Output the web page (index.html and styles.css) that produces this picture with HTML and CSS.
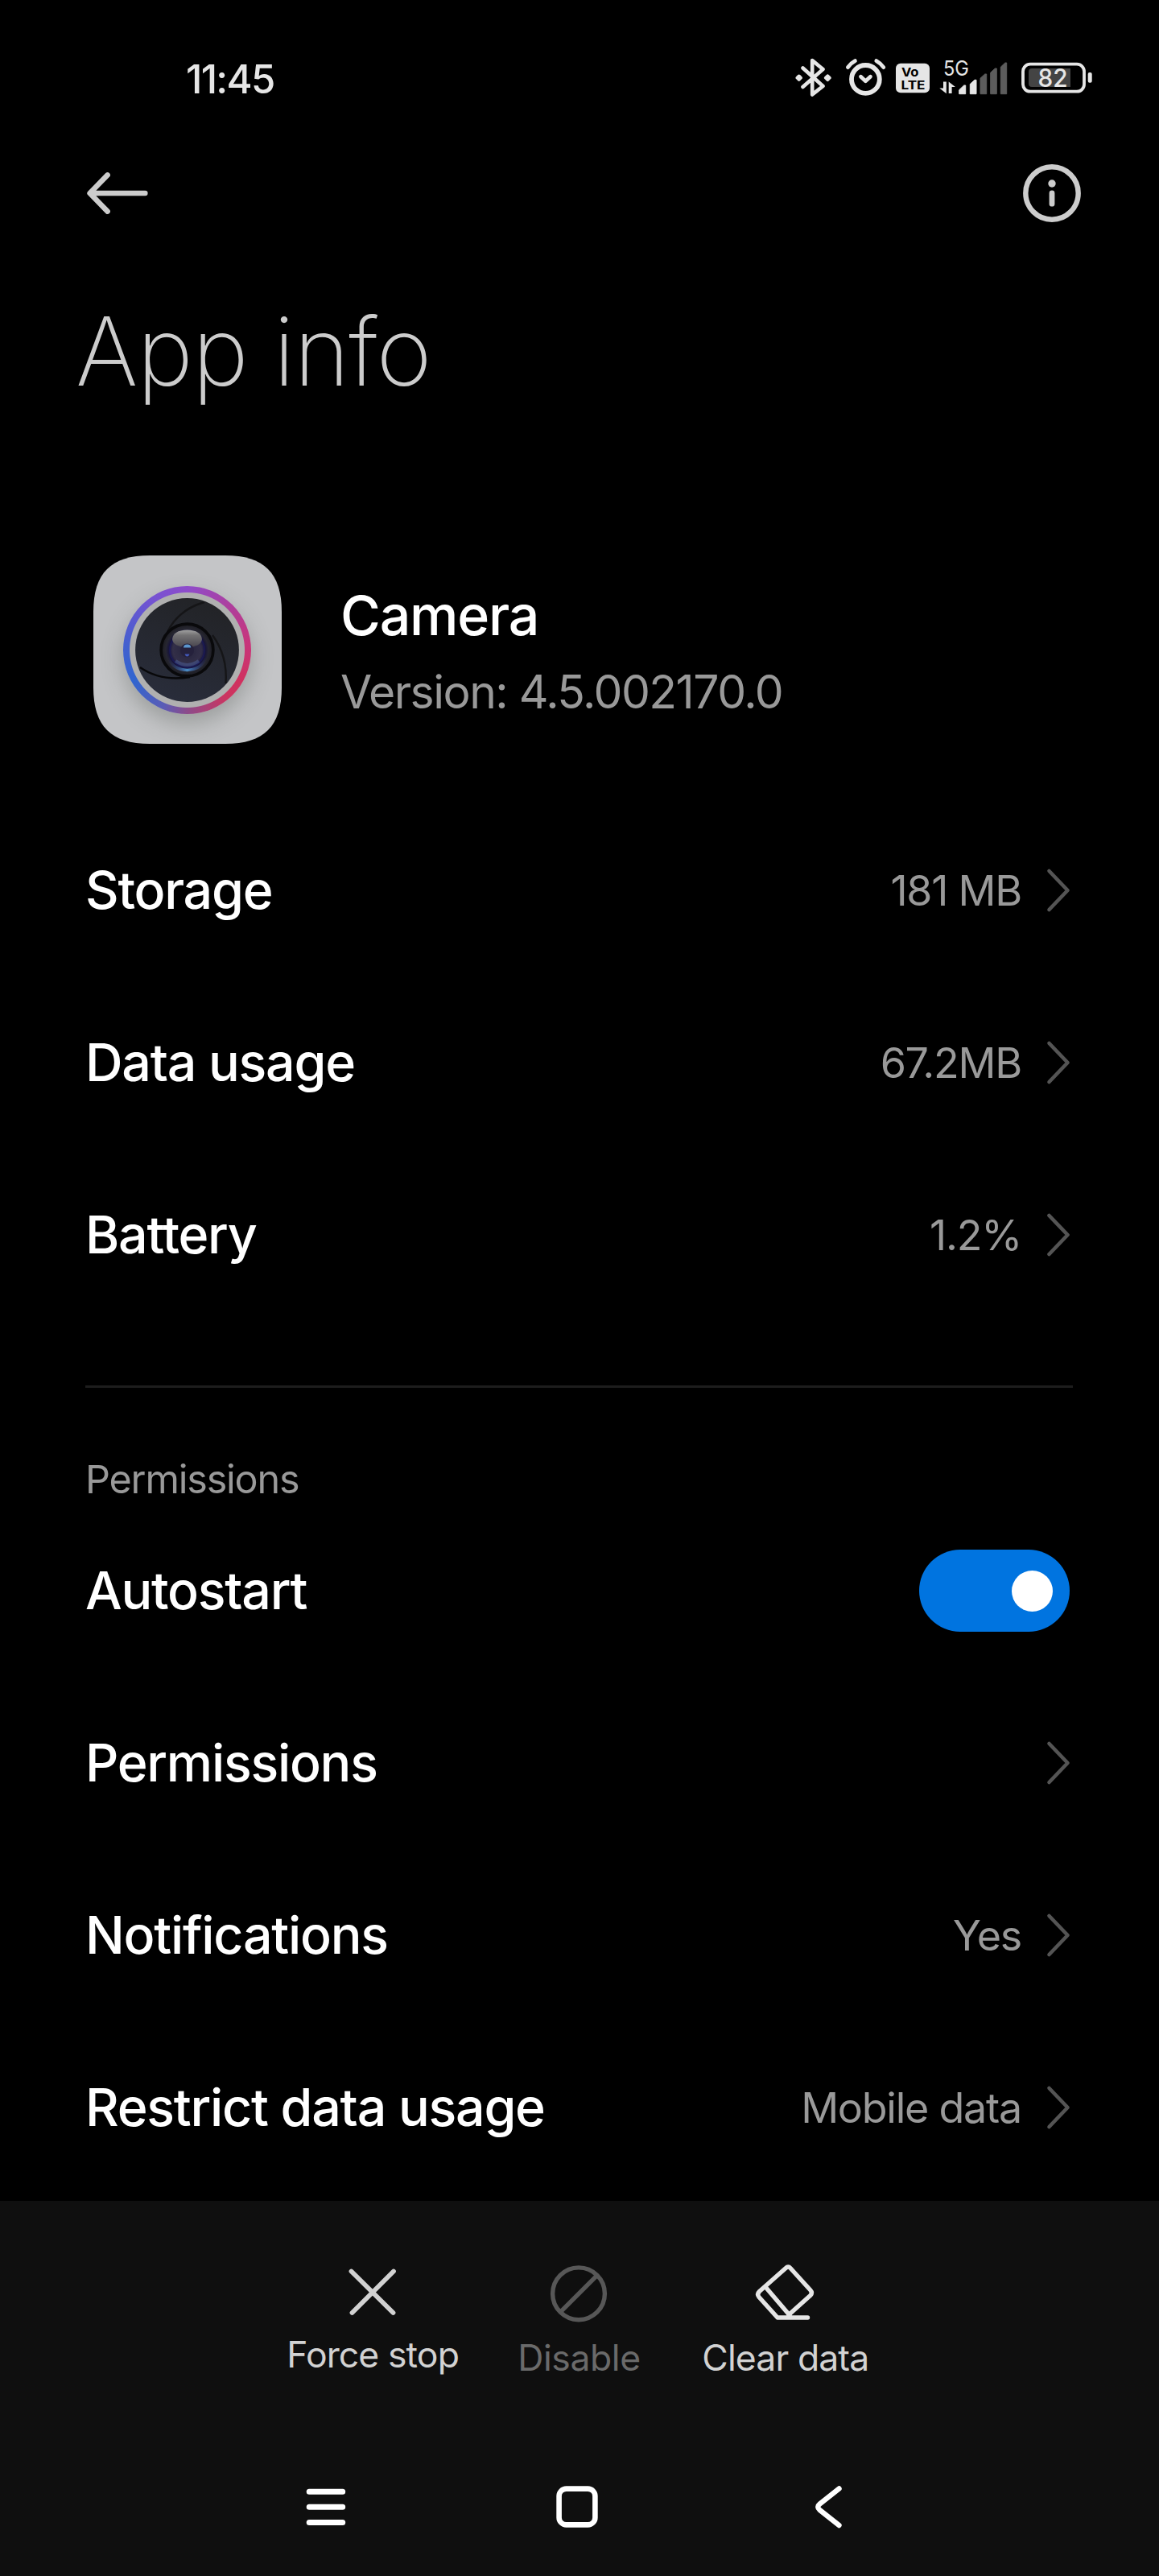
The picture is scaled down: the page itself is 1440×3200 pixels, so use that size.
FILE: index.html
```
<!DOCTYPE html>
<html lang="en">
<head>
    <meta charset="UTF-8">
    <meta name="viewport" content="width=device-width, initial-scale=1.0">
    <title>App info</title>
    <link rel="stylesheet" href="styles.css">
</head>
<body>
    <header class="status-bar">
        <span class="clock">11:45</span>
        <div class="status-icons">
            <svg class="bluetooth" width="46" height="54" viewBox="0 0 46 54">
                <path d="M9.5 13.5L34.5 36 21.2 46.5V4L34.5 15 9.5 37" fill="none" stroke="#e6e6e6" stroke-width="4.6" stroke-linecap="round" stroke-linejoin="round"/>
                <path d="M4.7 23.5l2.2 2.2-2.2 2.2-2.2-2.2zM40.3 23.3l2.4 2.4-2.4 2.4-2.4-2.4z" fill="#e6e6e6" stroke="#e6e6e6" stroke-width="4" stroke-linejoin="round"/>
            </svg>
            <svg class="alarm" width="51" height="54" viewBox="0 0 51 54" fill="none" stroke="#e6e6e6" stroke-linecap="round">
                <circle cx="25.4" cy="27.4" r="17.4" stroke-width="5.8"/>
                <path d="M19.5 24.2l5.9 5.5 6-5.5" stroke-width="4.8" stroke-linejoin="round"/>
                <path d="M3.4 12.6Q7 7.4 12.4 4.6M38.8 4.6Q44 7.4 47.8 12.6" stroke-width="4.8"/>
            </svg>
            <svg class="volte" width="42" height="54" viewBox="0 0 42 54">
                <rect y="7.7" width="42" height="36.6" rx="6" fill="#e6e6e6"/>
                <text x="7" y="24.2" textLength="21.5" lengthAdjust="spacingAndGlyphs">Vo</text>
                <text x="6.5" y="39.5" textLength="30" lengthAdjust="spacingAndGlyphs">LTE</text>
            </svg>
            <svg class="signal" width="86" height="54" viewBox="0 0 86 54" fill="#e6e6e6">
                <text x="6" y="22.8" textLength="32" lengthAdjust="spacingAndGlyphs">5G</text>
                <path d="M6 30.5h3.8v14.7L1.3 38.6H6zM12.7 45V30.5l8.2 6.6h-4.3V45z"/>
                <path d="M25.7 45.7v-5l6-5.7h2v10.7zM39.3 45.7V33.4l5.7-5.1h2v17.4z" stroke="#e6e6e6" stroke-linejoin="round"/>
                <path d="M52 45.7V26.2l5.7-5.2h2v24.7zM64.7 45.7V19.2l5.6-5.2h2v31.7zM77.3 45.7V12.2L82.8 7h1.9v38.7z" fill="#5c5c5c" stroke="#5c5c5c" stroke-linejoin="round"/>
            </svg>
            <svg class="battery" width="90" height="54" viewBox="0 0 90 54">
                <rect x="2" y="8.7" width="76" height="34" rx="9" fill="none" stroke="#e6e6e6" stroke-width="3.8"/>
                <path d="M13 14h48v23H13q-4 0-4-4V18q0-4 4-4z" fill="#444"/>
                <rect x="82.7" y="19" width="5" height="12.8" rx="2" fill="#e6e6e6"/>
                <text x="20.5" y="37" textLength="37" lengthAdjust="spacingAndGlyphs">82</text>
            </svg>
        </div>
    </header>

    <div class="toolbar">
        <svg width="76" height="54" viewBox="0 0 76 54" fill="none" stroke="#ccc" stroke-width="6.6" stroke-linecap="round" stroke-linejoin="round">
            <path d="M72.3 27H4M25.6 4.4L3.6 27l22 22.6"/>
        </svg>
        <svg width="72" height="72" viewBox="0 0 72 72">
            <circle cx="36" cy="36" r="32.7" fill="none" stroke="#ccc" stroke-width="6.4"/>
            <circle cx="36" cy="24" r="4.7" fill="#ccc"/>
            <rect x="32.6" y="32.6" width="6.8" height="20" rx="3.4" fill="#ccc"/>
        </svg>
    </div>

    <h1>App info</h1>

    <section class="app">
        <div class="app-icon">
            <div class="ring">
                <svg width="129" height="129" viewBox="0 0 129 129">
                    <defs>
                        <linearGradient id="blades" x1="0.7" y1="0" x2="0.3" y2="1">
                            <stop offset="0" stop-color="#222326"/>
                            <stop offset="1" stop-color="#292d3b"/>
                        </linearGradient>
                        <radialGradient id="glass">
                            <stop offset="0" stop-color="#25233c"/>
                            <stop offset="0.55" stop-color="#332f48"/>
                            <stop offset="0.7" stop-color="#17143a"/>
                            <stop offset="0.82" stop-color="#262630"/>
                            <stop offset="1" stop-color="#1b1b20"/>
                        </radialGradient>
                        <linearGradient id="gloss" x1="0" y1="0" x2="0" y2="1">
                            <stop offset="0" stop-color="#a2a2a2"/>
                            <stop offset="0.3" stop-color="#747374"/>
                            <stop offset="1" stop-color="#48454e"/>
                        </linearGradient>
                        <linearGradient id="glow" x1="0" y1="0" x2="1" y2="0">
                            <stop offset="0" stop-color="#34449a" stop-opacity="0"/>
                            <stop offset="0.5" stop-color="#4a8cc4"/>
                            <stop offset="1" stop-color="#34449a" stop-opacity="0"/>
                        </linearGradient>
                    </defs>
                    <circle cx="64.5" cy="64.5" r="64.4" fill="url(#blades)"/>
                    <g fill="none" stroke="#151517" stroke-width="2.4">
                        <path d="M40 42Q54 14 86 5"/>
                        <path d="M96 46Q115 72 112.5 106"/>
                        <path d="M6 86Q32 104 68 98" stroke="#08080a"/>
                    </g>
                    <circle cx="64.5" cy="64.5" r="32.4" fill="url(#glass)" stroke="#09090b" stroke-width="3.6"/>
                    <path d="M41 75Q47 88.5 64.5 89.5 82 88.5 88 75" fill="none" stroke="url(#glow)" stroke-width="3.6"/>
                    <circle cx="64.5" cy="64.5" r="21.5" fill="none" stroke="#1b1a52" stroke-width="2"/>
                    <path d="M50 78Q64.5 88 79 78" fill="none" stroke="#4c5f9c" stroke-opacity="0.5" stroke-width="4"/>
                    <path d="M46 51Q47 40 64.5 39.5 82 40 83 51 82 60.5 64.5 61 47 60.5 46 51z" fill="url(#gloss)"/>
                    <circle cx="64.5" cy="65" r="8.5" fill="#25213c"/>
                    <path d="M60 61.5q0-4 4.6-4t4.6 4z" fill="#5b96cd"/>
                    <path d="M61.5 69.5h6q-1 3-3 3t-3-3z" fill="#4258b8"/>
                </svg>
            </div>
        </div>
        <div>
            <div class="app-name">Camera</div>
            <div class="app-version">Version: 4.5.002170.0</div>
        </div>
    </section>

    <main>
        <div class="row">
            <span>Storage</span>
            <span class="value">181 MB</span>
            <svg class="chevron" viewBox="0 0 29 54"><path d="M2.5 3L25.5 27 2.5 51"/></svg>
        </div>
        <div class="row">
            <span>Data usage</span>
            <span class="value">67.2MB</span>
            <svg class="chevron" viewBox="0 0 29 54"><path d="M2.5 3L25.5 27 2.5 51"/></svg>
        </div>
        <div class="row">
            <span>Battery</span>
            <span class="value">1.2%</span>
            <svg class="chevron" viewBox="0 0 29 54"><path d="M2.5 3L25.5 27 2.5 51"/></svg>
        </div>

        <hr>

        <h2>Permissions</h2>
        <div class="row">
            <span>Autostart</span>
            <span class="toggle"><span class="knob"></span></span>
        </div>
        <div class="row">
            <span>Permissions</span>
            <span class="value"></span>
            <svg class="chevron" viewBox="0 0 29 54"><path d="M2.5 3L25.5 27 2.5 51"/></svg>
        </div>
        <div class="row">
            <span>Notifications</span>
            <span class="value">Yes</span>
            <svg class="chevron" viewBox="0 0 29 54"><path d="M2.5 3L25.5 27 2.5 51"/></svg>
        </div>
        <div class="row">
            <span>Restrict data usage</span>
            <span class="value">Mobile data</span>
            <svg class="chevron" viewBox="0 0 29 54"><path d="M2.5 3L25.5 27 2.5 51"/></svg>
        </div>
    </main>

    <footer>
        <div class="actions">
            <div class="action force-stop">
                <svg width="80" height="80" viewBox="0 0 80 80" fill="none" stroke="#d2d2d2" stroke-width="5.8" stroke-linecap="round">
                    <path d="M13.5 13.5l52 51.5M66 13.5L14.5 65"/>
                </svg>
                <span>Force stop</span>
            </div>
            <div class="action disabled">
                <svg width="80" height="80" viewBox="0 0 80 80" fill="none" stroke="#575757" stroke-width="5.4">
                    <circle cx="40" cy="41.3" r="32.4"/>
                    <path d="M62.5 18.8l-45 45"/>
                </svg>
                <span>Disable</span>
            </div>
            <div class="action">
                <svg width="80" height="80" viewBox="0 0 80 80" fill="none" stroke="#e6e6e6" stroke-width="5.4" stroke-linecap="round" stroke-linejoin="round">
                    <path d="M44 67.5L70.8 43.5Q74 40.3 71 37L46 9.5Q43.3 6.5 40.3 9.5L7.5 38.5Q4 42 7 45.5L30 71H67.5"/>
                    <path d="M15.5 33.5L45 68"/>
                </svg>
                <span>Clear data</span>
            </div>
        </div>
        <nav>
            <svg width="54" height="54" viewBox="0 0 54 54" stroke="#fff" stroke-width="7" stroke-linecap="round">
                <path d="M6.2 8.2h41.5M6.2 27.3h41.5M6.2 46.5h41.5"/>
            </svg>
            <svg width="54" height="54" viewBox="0 0 54 54" fill="none" stroke="#fff" stroke-width="6.6">
                <rect x="3.6" y="4.6" width="44.8" height="44.8" rx="9"/>
            </svg>
            <svg width="54" height="54" viewBox="0 0 54 54" fill="none" stroke="#fff" stroke-width="6.4" stroke-linecap="round">
                <path d="M39.5 4.5L15.5 23.5Q11 27.2 15.5 31L39.5 50"/>
            </svg>
        </nav>
    </footer>
</body>
</html>
```
FILE: styles.css
```
* {
    box-sizing: border-box;
}

body {
    margin: 0;
    width: 1440px;
    height: 3200px;
    display: flex;
    flex-direction: column;
    background-color: #000;
    color: #fff;
    font-family: Inter, Roboto, sans-serif;
}

svg {
    display: block;
    flex: none;
    overflow: visible;
}

.status-bar {
    height: 196px;
    padding: 0 81px 0 231px;
    display: flex;
    justify-content: space-between;
    align-items: center;
    color: #e6e6e6;
}

.clock {
    font-size: 49px;
    font-weight: 500;
    letter-spacing: -1.7px;
}

.status-icons {
    display: flex;
    align-items: center;
}

.alarm {
    margin-left: 16px;
}

.volte {
    margin-left: 12px;
}

.signal {
    margin-left: 11px;
}

.battery {
    margin-left: 17px;
}

.volte text {
    fill: #000;
    font-size: 15px;
    font-weight: 700;
}

.signal text {
    font-size: 26px;
}

.battery text {
    fill: #e6e6e6;
    font-size: 31px;
    font-weight: 500;
}

.toolbar {
    height: 87px;
    padding: 0 97px 0 108px;
    display: flex;
    justify-content: space-between;
    align-items: center;
}

h1 {
    margin: 78px 0 0 94px;
    color: #ccc;
    font-size: 118px;
    font-weight: 250;
    line-height: 150px;
    letter-spacing: -1.1px;
}

.app {
    margin-top: 179px;
    padding-left: 116px;
    display: flex;
    gap: 73px;
}

.app-icon {
    width: 234px;
    height: 234px;
    padding: 0 1px 0 0;
    display: grid;
    place-items: center;
    background-color: #c4c5c7;
    clip-path: path("M70 0H164C212 0 234 22 234 70V164C234 212 212 234 164 234H70C22 234 0 212 0 164V70C0 22 22 0 70 0Z");
}

.ring {
    width: 159px;
    height: 159px;
    border-radius: 50%;
    display: grid;
    place-items: center;
    background:
        radial-gradient(circle, #b0b0b0 71px, transparent 72px),
        conic-gradient(#8e4ccb, #ae3e9c 45deg, #c6367e 80deg, #d0315f 120deg, #cc3560 140deg, #8c4b8a 180deg, #5a5cb6 203deg, #3165cf 240deg, #4360cf 275deg, #7453d2 325deg, #8e4ccb);
    box-shadow: 0 12px 26px rgba(80, 85, 80, 0.35);
}

.app-name {
    margin-top: 34px;
    font-size: 68px;
    font-weight: 500;
    line-height: 80px;
    letter-spacing: -1.2px;
}

.app-version {
    margin-top: 21px;
    color: #999;
    font-size: 57px;
    line-height: 70px;
    letter-spacing: -1.5px;
}

main {
    padding: 75px 107px 0 106px;
}

.row {
    height: 214px;
    display: flex;
    align-items: center;
    font-size: 64.5px;
    font-weight: 500;
    letter-spacing: -1.25px;
}

.value {
    margin-left: auto;
    color: #999;
    font-size: 52px;
    font-weight: 400;
}

.chevron {
    width: 29px;
    height: 54px;
    margin: 0 3px 0 32px;
    fill: none;
    stroke: #545454;
    stroke-width: 4.6;
    stroke-linecap: round;
    stroke-linejoin: round;
}

hr {
    height: 3px;
    margin: 80px 0 0;
    border: none;
    background-color: #1d1d1d;
}

h2 {
    margin: 84px 0 1px;
    color: #999;
    font-size: 48.5px;
    font-weight: 400;
    line-height: 60px;
    letter-spacing: -1.2px;
}

.toggle {
    width: 187px;
    height: 102px;
    margin: 0 4px 0 auto;
    padding-right: 21px;
    display: flex;
    justify-content: flex-end;
    align-items: center;
    border-radius: 51px;
    background-color: #0074e0;
}

.knob {
    width: 51px;
    height: 51px;
    border-radius: 50%;
    background-color: #fff;
}

footer {
    flex: 1;
    margin-top: 9px;
    padding-top: 74px;
    background-color: #0f0f0f;
}

.actions {
    width: 769px;
    margin: 0 auto 0 335px;
    display: grid;
    grid-template-columns: repeat(3, 1fr);
}

.action {
    display: flex;
    flex-direction: column;
    align-items: center;
    gap: 16px;
    color: #d2d2d2;
    font-size: 44.5px;
    line-height: 50px;
    letter-spacing: -0.9px;
}

.force-stop {
    gap: 12px;
}

.disabled {
    color: #6a6a6a;
    letter-spacing: -0.4px;
}

nav {
    margin-top: 133px;
    padding: 0 383px 0 378px;
    display: flex;
    justify-content: space-between;
}
```
